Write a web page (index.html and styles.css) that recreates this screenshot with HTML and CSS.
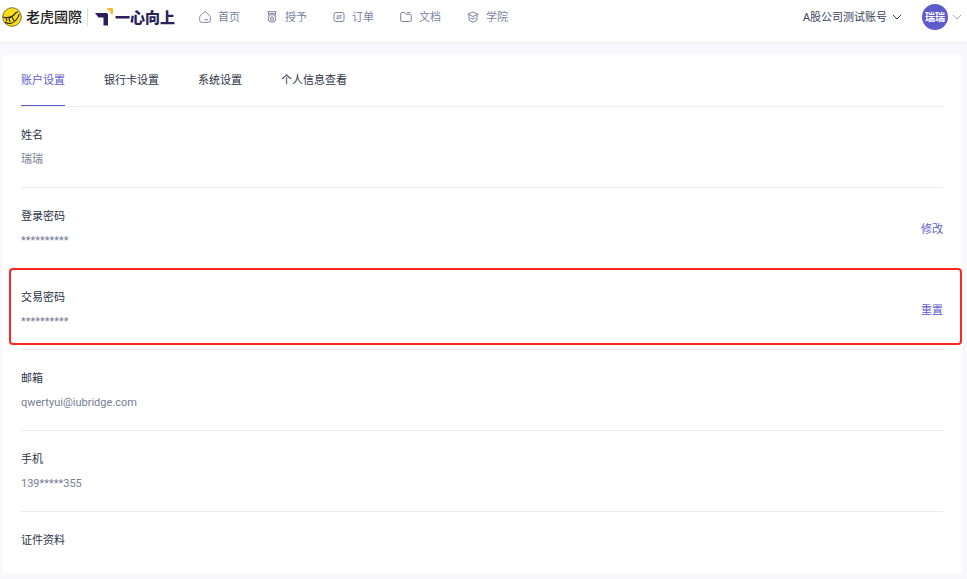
FILE: index.html
```html
<!DOCTYPE html>
<html lang="zh-CN">

	<head>
		<meta charset="UTF-8">
		<title>账户设置</title>
		<link rel="stylesheet" href="styles.css">
	</head>

	<body>
		<header class="header">
			<a class="logo" href="#">
				<svg class="tiger" viewBox="0 0 20 20">
					<circle cx="10" cy="10" r="9.300" fill="#fbdc1c" stroke="#5a5214" stroke-width=".8" />
					<path d="M1 10c4 1 8 1 11-2 1-2 2-3 4-3M3 15c4 3 9 1 11-2 2-2 3-4 3-6M4 11l1 3M7 11l1 4M10 10l2 4" fill="none" stroke="#2a2610" stroke-width="1.100" />
				</svg>
				<span class="tiger-name">老虎國際</span>
			</a>
			<a class="logo brand" href="#">
				<svg class="arrow" viewBox="0 0 19 18">
					<path d="M0 5h11.500a1.500 1.500 0 0 1 1.500 1.500v11H8.500V9.500H3.500z" fill="#2d1f5c" />
					<path d="M12.500 0H17a1 1 0 0 1 1 1v5h-2.500V2.500h-3z" fill="#f7b52c" />
				</svg>
				<span class="brand-name">一心向上</span>
			</a>
			<nav class="nav">
				<a href="#">
					<svg viewBox="0 0 12 12"><path d="M2.500 11.300h7a1.800 1.800 0 0 0 1.800-1.800V6.300a2 2 0 0 0-.7-1.500L7.400 1.500a2 2 0 0 0-2.800 0L1.400 4.800a2 2 0 0 0-.7 1.500v3.200a1.800 1.800 0 0 0 1.800 1.800zM5.500 8.700h3.500" /></svg>
					<span>首页</span>
				</a>
				<a href="#">
					<svg viewBox="0 0 12 12"><path d="M1.500 .7h9M2.500 .7v3.500M9.500 .7v3.500M3 2.700h6" /><circle cx="6" cy="7.400" r="3.900" /><path d="M6 5.300l.7 1.400 1.500.2-1.100 1 .3 1.500L6 8.700l-1.400.7.3-1.500-1.100-1 1.500-.2z" /></svg>
					<span>授予</span>
				</a>
				<a href="#">
					<svg viewBox="0 0 12 12"><rect x="1" y="1.500" width="10" height="9" rx="2" /><path d="M3.500 5h5L7 3.500M8.500 7h-5L5 8.500" /></svg>
					<span>订单</span>
				</a>
				<a href="#">
					<svg viewBox="0 0 12 12"><path d="M.7 9V3a1.500 1.500 0 0 1 1.500-1.500h2.300L6 3.300h3.800A1.500 1.500 0 0 1 11.300 4.800V9a1.500 1.500 0 0 1-1.500 1.500H2.200A1.500 1.500 0 0 1 .7 9zM7 1.500h3.500" /></svg>
					<span>文档</span>
				</a>
				<a href="#">
					<svg viewBox="0 0 12 12"><path d="M6 1L.8 3.200 6 5.500l5.200-2.300zM2 4v5L6 11.300 10 9V4M3.500 7L6 8l2.500-1" /></svg>
					<span>学院</span>
				</a>
			</nav>
			<button class="company">
				<span>A股公司测试账号</span>
				<svg class="down" viewBox="0 0 10 6"><path d="M1 1l4 4 4-4" /></svg>
			</button>
			<button class="user">
				<span class="avatar">瑞瑞</span>
				<svg class="down light" viewBox="0 0 10 6"><path d="M1 1l4 4 4-4" /></svg>
			</button>
		</header>

		<main class="panel">
			<div class="tabs">
				<button class="active">账户设置</button>
				<button>银行卡设置</button>
				<button>系统设置</button>
				<button>个人信息查看</button>
			</div>
			<div class="item">
				<div>
					<h3>姓名</h3>
					<p>瑞瑞</p>
				</div>
			</div>
			<div class="item">
				<div>
					<h3>登录密码</h3>
					<p>**********</p>
				</div>
				<a href="#">修改</a>
			</div>
			<div class="item marked">
				<div>
					<h3>交易密码</h3>
					<p>**********</p>
				</div>
				<a href="#">重置</a>
			</div>
			<div class="item">
				<div>
					<h3>邮箱</h3>
					<p>qwertyui@iubridge.com</p>
				</div>
			</div>
			<div class="item">
				<div>
					<h3>手机</h3>
					<p>139*****355</p>
				</div>
			</div>
			<div class="item">
				<div>
					<h3>证件资料</h3>
				</div>
			</div>
		</main>
	</body>

</html>
```
FILE: styles.css
```css
* {
	box-sizing: border-box;
}

body {
	margin: 0;
	background: #f8f8fd;
	color: #2b3445;
	font: 11px/18px "Noto Sans", "Noto Sans CJK SC", sans-serif;
}

a {
	color: #5e5ccc;
	text-decoration: none;
}

button {
	border: none;
	background: none;
	padding: 0;
	color: inherit;
	font: inherit;
	cursor: pointer;
}

h3,
p {
	margin: 0;
	font-size: 11px;
	font-weight: normal;
}

.header {
	display: flex;
	align-items: center;
	height: 42px;
	padding: 0 5px 8px 2px;
	background: #fff;
	box-shadow: 0 1px 2px #ececf2;
}

/* logo */
.logo {
	display: flex;
	align-items: center;
	white-space: nowrap;
}

.tiger {
	width: 20px;
	height: 20px;
	margin-right: 4px;
}

.tiger-name {
	color: #222;
	font-size: 14px;
	font-weight: 500;
}

.brand {
	margin-left: 5px;
	padding-left: 7px;
	border-left: 1px solid #ddd;
}

.arrow {
	width: 19px;
	height: 18px;
	margin-right: 1px;
}

.brand-name {
	color: #2d1f5c;
	font-size: 15px;
	font-weight: 900;
}

.nav {
	display: flex;
	gap: 26px;
	margin-left: 24px;
}

.nav a {
	display: flex;
	align-items: center;
	gap: 7px;
	color: #7c84a3;
	white-space: nowrap;
}

.nav svg {
	width: 12px;
	height: 12px;
	fill: none;
	stroke: #7c84a3;
}

.company {
	display: flex;
	align-items: center;
	gap: 5px;
	margin-left: auto;
	color: #3c4560;
	white-space: nowrap;
}

.down {
	width: 10px;
	height: 6px;
	fill: none;
	stroke: #3c4560;
}

.down.light {
	stroke: #a3a9ba;
}

.user {
	display: flex;
	align-items: center;
	gap: 4px;
	margin-left: 20px;
}

.avatar {
	width: 26px;
	height: 26px;
	border-radius: 50%;
	background: #5e5ccc;
	color: #fff;
	font-size: 10px;
	font-weight: bold;
	line-height: 26px;
	text-align: center;
}

/* 设置面板 */
.panel {
	margin: 13px 5px 5px 2px;
	padding: 0 19px;
	border-radius: 4px;
	background: #fff;
}

.tabs {
	display: flex;
	gap: 39px;
	height: 52px;
	border-bottom: 1px solid #ebecf3;
}

.tabs button {
	border-bottom: 1px solid transparent;
}

.tabs .active {
	border-color: #5e5ccc;
	color: #5e5ccc;
}

.item {
	display: flex;
	justify-content: space-between;
	align-items: center;
	padding: 19px 0 18px;
	border-bottom: 1px solid #ebecf3;
}

.item:last-child {
	padding-bottom: 24px;
	border-bottom: none;
}

.item p {
	margin-top: 7px;
	color: #767d93;
	font-family: Roboto, "Noto Sans CJK SC", sans-serif;
}

/* 红框盖在上下分割线上面 */
.marked {
	position: relative;
}

.marked::after {
	content: "";
	position: absolute;
	top: -1px;
	right: -19px;
	bottom: 4px;
	left: -12px;
	border: 2px solid #f9291f;
	border-radius: 4px;
	pointer-events: none;
}
```
